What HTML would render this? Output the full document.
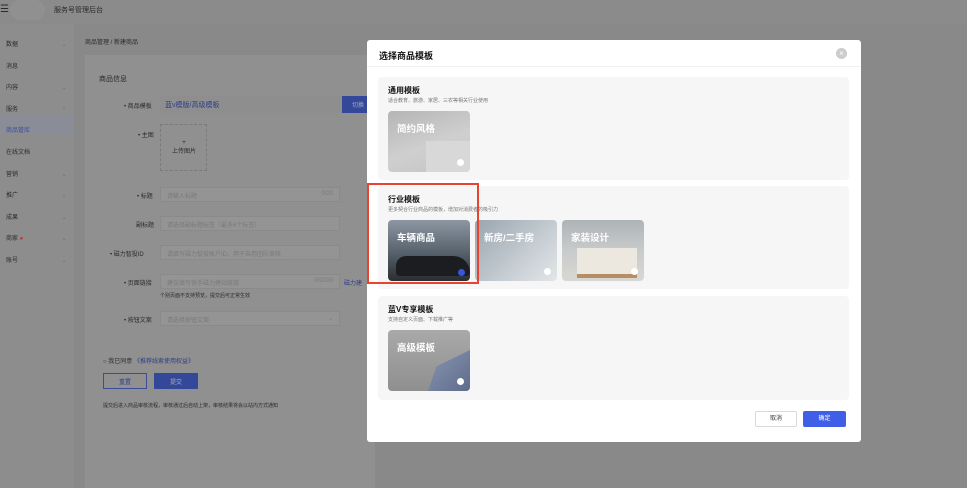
<!DOCTYPE html>
<html><head><meta charset="utf-8"><style>
*{margin:0;padding:0;box-sizing:border-box}
body{width:967px;height:488px;overflow:hidden;background:#898989;font-family:"Liberation Sans","Noto Sans CJK SC",sans-serif;position:relative;color:#333}
.a{position:absolute}
.t{font-size:7px;color:#2a2a2a;white-space:nowrap}
.side{left:0;top:24px;width:74px;height:464px;background:#8d8d8d}
.inp{background:#949494;border:1px solid #8a8a8a;height:15px;font-size:6px;color:#7a7a7a;padding:3px 6px;white-space:nowrap}
.modal{left:367px;top:40px;width:494px;height:402px;background:#fff;border-radius:3px}
.sec{background:#f6f6f7;border-radius:4px;left:11px;width:471px}
.card{width:82px;height:61px;border-radius:4px;overflow:hidden}
.card .l{position:absolute;left:9px;top:10px;color:#fff;font-size:9.5px;font-weight:bold}
.dot{position:absolute;right:6px;bottom:6px;width:7px;height:7px;border-radius:50%;background:#fff}
.h{font-size:8px;font-weight:bold;color:#111}
.s{font-size:5px;color:#777}
</style></head><body>
<div class="a" style="left:0;top:0;width:967px;height:24px;background:#8b8b8b"></div>
<div class="a t" style="left:0;top:4px;font-size:10px">☰</div>
<div class="a" style="left:10px;top:0;width:35px;height:20px;border-radius:10px;background:#909090"></div>
<div class="a t" style="left:54px;top:5px;font-size:7px">服务号管理后台</div>
<div class="a side"></div>
<div class="a" style="left:0;top:116px;width:74px;height:18px;background:#8a8d97"></div>
<div class="a t" style="left:6px;top:35px;line-height:21.6px;font-size:6px">数据<br>消息<br>内容<br>服务<br><span style="color:#3b4c99">商品管库</span><br>在线文档<br>营销<br>推广<br>成果<br>商家 <span style="color:#b33">●</span><br>账号</div>
<div class="a t" style="left:62px;top:35px;line-height:21.6px;font-size:5px;color:#666">⌄<br><br>⌄<br>⌃<br><br><br>⌄<br>⌄<br>⌄<br>⌄<br>⌄</div>
<div class="a t" style="left:85px;top:37px;font-size:6px">商品管理 / 新建商品</div>
<div class="a" style="left:85px;top:55px;width:290px;height:433px;background:#909090"></div>
<div class="a t" style="left:99px;top:74px">商品信息</div>
<div class="a t" style="left:124px;top:101px;font-size:6px">• 商品模板</div>
<div class="a" style="left:160px;top:96px;width:182px;height:17px;background:#8e8e8e"></div>
<div class="a t" style="left:165px;top:100px;color:#2c3e8a;font-size:7px">蓝v模版/高级模板</div>
<div class="a" style="left:342px;top:96px;width:26px;height:17px;background:#34489a"></div>
<div class="a t" style="left:352px;top:100px;font-size:6px;color:#aab">切换</div>
<div class="a t" style="left:138px;top:130px;font-size:6px">• 主图</div>
<div class="a" style="left:160px;top:124px;width:47px;height:47px;border:1px dashed #7a7a7a"></div>
<div class="a t" style="left:172px;top:140px;font-size:6px;text-align:center">+<br>上传图片</div>
<div class="a t" style="left:137px;top:191px;font-size:6px">• 标题</div>
<div class="a inp" style="left:160px;top:187px;width:180px">请输入标题<span style="float:right">0/20</span></div>
<div class="a t" style="left:136px;top:220px;font-size:6px">副标题</div>
<div class="a inp" style="left:160px;top:216px;width:180px">请选择副标题标签（最多6个标签）</div>
<div class="a t" style="left:110px;top:249px;font-size:6px">• 磁力智投ID</div>
<div class="a inp" style="left:160px;top:245px;width:180px">请填写磁力智投账户ID，用于自用团队审核</div>
<div class="a t" style="left:124px;top:278px;font-size:6px">• 页面链接</div>
<div class="a inp" style="left:160px;top:274px;width:180px">建议填写快手磁力建站链接<span style="float:right">0/2000</span></div>
<div class="a t" style="left:344px;top:278px;font-size:6px;color:#2c3e8a">磁力建</div>
<div class="a t" style="left:160px;top:292px;font-size:5px">个别页面不支持预览，提交后可正常生效</div>
<div class="a t" style="left:124px;top:315px;font-size:6px">• 按钮文案</div>
<div class="a inp" style="left:160px;top:311px;width:180px">请选择按钮文案<span style="float:right">⌄</span></div>
<div class="a t" style="left:103px;top:356px;font-size:6px">○ 我已同意 <span style="color:#2c3e8a">《推荐线索使用权益》</span></div>
<div class="a" style="left:103px;top:373px;width:44px;height:16px;border:1px solid #3b4c99"></div>
<div class="a t" style="left:119px;top:377px;font-size:6px;color:#2c3e8a">重置</div>
<div class="a" style="left:154px;top:373px;width:44px;height:16px;background:#34489a"></div>
<div class="a t" style="left:170px;top:377px;font-size:6px;color:#aab">提交</div>
<div class="a t" style="left:103px;top:402px;font-size:5px">提交后进入商品审核流程，审核通过后自动上架，审核结果将会以站内方式通知</div>

<div class="a modal">
<div class="a" style="left:12px;top:9px;font-size:9px;font-weight:bold;color:#111">选择商品模板</div>
<div class="a" style="left:469px;top:8px;width:11px;height:11px;border-radius:50%;background:#ccc;color:#fff;font-size:8px;line-height:11px;text-align:center">×</div>
<div class="a" style="left:0;top:26px;width:494px;height:1px;background:#f0f0f0"></div>
<div class="a sec" style="top:37px;height:103px">
<div class="a h" style="left:10px;top:8px">通用模板</div>
<div class="a s" style="left:10px;top:20px">适合教育、旅游、家居、三农等相关行业使用</div>
<div class="a card" style="left:10px;top:34px;background:linear-gradient(160deg,#b5b5b5,#cfcfcf 55%,#c3c3c3)"><div class="a" style="left:38px;top:30px;width:44px;height:31px;background:#d8d8d8"></div><span class="l">简约风格</span><span class="dot"></span></div>
</div>
<div class="a sec" style="top:146px;height:103px">
<div class="a h" style="left:10px;top:8px">行业模板</div>
<div class="a s" style="left:10px;top:20px">更多契合行业商品的模板，增加对消费者的吸引力</div>
<div class="a card" style="left:10px;top:34px;background:linear-gradient(180deg,#8d97a3,#55606b 55%,#2a2d31)"><div class="a" style="left:8px;top:36px;width:74px;height:20px;border-radius:12px 20px 4px 4px;background:#1b1d21"></div><span class="l">车辆商品</span><span class="a" style="right:5px;bottom:5px;width:7px;height:7px;border-radius:50%;background:#3557e0"></span></div>
<div class="a card" style="left:97px;top:34px;background:linear-gradient(135deg,#9aa5af,#c6cdd3 60%,#e3e6e8)"><span class="l">新房/二手房</span><span class="dot"></span></div>
<div class="a card" style="left:184px;top:34px;background:linear-gradient(180deg,#aeb3b6,#c8cbcc 50%,#d9d7d2)"><div class="a" style="left:15px;top:28px;width:60px;height:26px;background:#ece8e0"></div><div class="a" style="left:15px;top:54px;width:60px;height:4px;background:#b58f63"></div><span class="l">家装设计</span><span class="dot"></span></div>
</div>
<div class="a sec" style="top:256px;height:104px">
<div class="a h" style="left:10px;top:8px">蓝V专享模板</div>
<div class="a s" style="left:10px;top:20px">支持自定义页面、下载推广等</div>
<div class="a card" style="left:10px;top:34px;background:linear-gradient(180deg,#a9a9a9,#8f8f8f)"><div class="a" style="left:40px;top:20px;width:42px;height:41px;background:linear-gradient(135deg,#8996b2,#5e6b8b);clip-path:polygon(100% 0,100% 100%,0 100%,20% 40%)"></div><span class="l">高级模板</span><span class="dot"></span></div>
</div>
<div class="a" style="left:388px;top:371px;width:42px;height:16px;border:1px solid #d9d9d9;border-radius:2px;font-size:6px;text-align:center;line-height:14px;color:#333">取消</div>
<div class="a" style="left:436px;top:371px;width:43px;height:16px;background:#3f5fe8;border-radius:2px;font-size:6px;text-align:center;line-height:16px;color:#fff">确定</div>
</div>
<div class="a" style="left:367px;top:183px;width:112px;height:101px;border:2px solid #e8432e"></div>
</body></html>
